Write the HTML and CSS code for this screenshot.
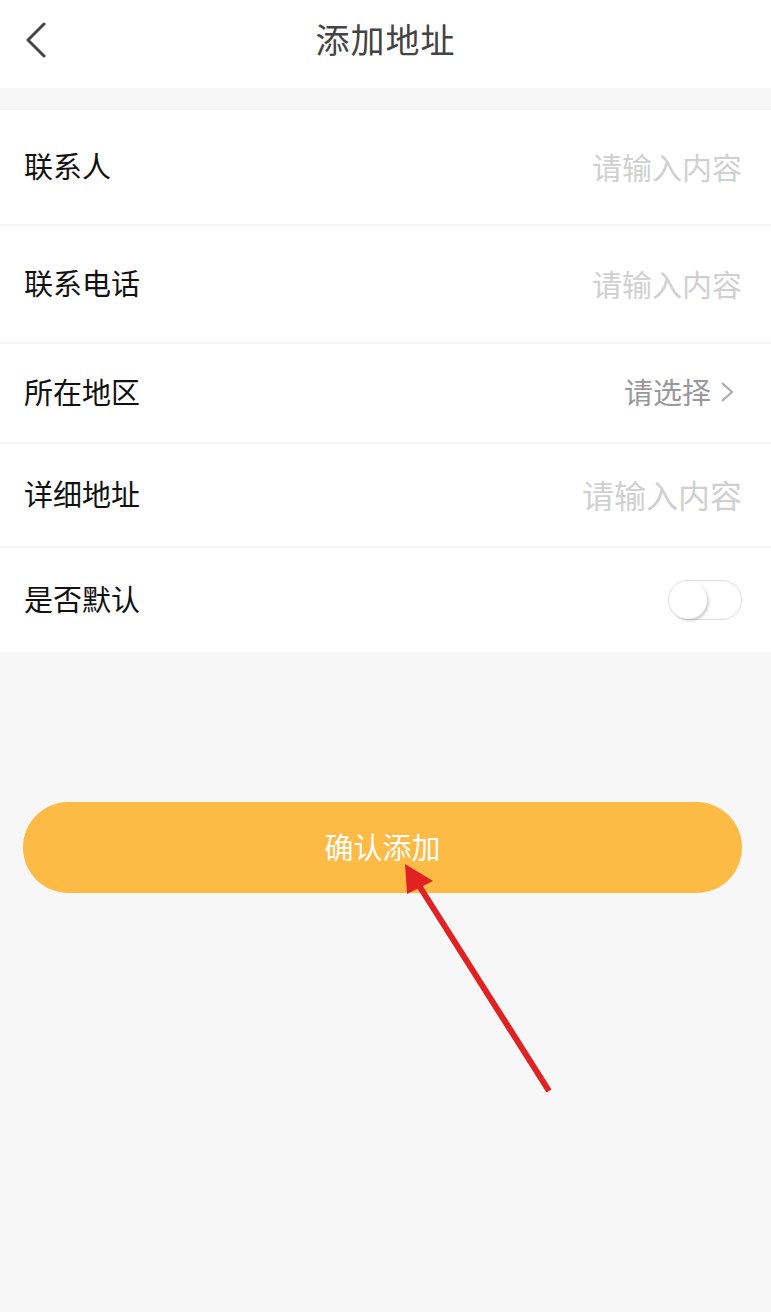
FILE: index.html
```html
<!DOCTYPE html>
<html lang="zh-CN">
<head>
<meta charset="utf-8">
<title>添加地址</title>
<link rel="stylesheet" href="styles.css">
</head>
<body>
<div class="page">
  <header class="topbar">
    <span class="back">
      <svg width="24" height="40" viewBox="0 0 24 40"><path d="M18 4 L2 20 L18 36" fill="none" stroke="#444" stroke-width="3" stroke-linecap="round" stroke-linejoin="round"/></svg>
    </span>
    <h1 class="title">添加地址</h1>
  </header>

  <div class="form">
    <div class="row r1"><span class="label">联系人</span><span class="ph">请输入内容</span></div>
    <div class="row r2"><span class="label">联系电话</span><span class="ph">请输入内容</span></div>
    <div class="row r3"><span class="label">所在地区</span><span class="select">请选择<svg width="14" height="24" viewBox="0 0 14 24"><path d="M2 3 L12 12 L2 21" fill="none" stroke="#aaa" stroke-width="2"/></svg></span></div>
    <div class="row r4"><span class="label">详细地址</span><span class="ph big">请输入内容</span></div>
    <div class="row r5"><span class="label">是否默认</span><span class="switch"><span class="knob"></span></span></div>
  </div>

  <div class="actions">
    <button class="submit">确认添加</button>
  </div>

  <svg class="arrow" width="771" height="1312" viewBox="0 0 771 1312">
    <line x1="549" y1="1091" x2="418" y2="884" stroke="#e02222" stroke-width="6"/>
    <polygon points="405,864 433,881 407,894" fill="#e02222"/>
  </svg>
</div>
</body>
</html>
```
FILE: styles.css
```css
html, body {
  margin: 0;
  padding: 0;
}
body {
  background: #f7f7f7;
  font-family: "Noto Sans CJK SC", "Noto Sans", sans-serif;
}
.page {
  position: relative;
  width: 771px;
  min-height: 1312px;
}
.topbar {
  height: 88px;
  background: #fff;
  display: flex;
  align-items: center;
  justify-content: center;
  position: relative;
}
.back {
  position: absolute;
  left: 26px;
  top: 20px;
  display: flex;
}
.title {
  margin: 0;
  font-size: 34px;
  font-weight: 400;
  color: #444;
  letter-spacing: 1px;
  line-height: 1;
  margin-top: -11px;
}
.form {
  margin-top: 22px;
  background: #fff;
}
.row {
  display: flex;
  align-items: center;
  justify-content: space-between;
  padding: 0 29px 0 24px;
  background: #fff;
  border-top: 2px solid #f4f4f4;
}
.r1 { height: 114px; border-top: none; }
.r2 { height: 116px; }
.r3 { height: 98px; }
.r4 { height: 102px; }
.r5 { height: 104px; }
.label {
  font-size: 29px;
  color: #111;
  line-height: 1;
  margin-top: -3px;
}
.ph {
  font-size: 30px;
  color: #d0d0d0;
  line-height: 1;
  margin-top: -3px;
}
.ph.big {
  font-size: 32px;
}
.select {
  display: flex;
  align-items: center;
  gap: 9px;
  font-size: 29px;
  color: #999;
  line-height: 1;
  margin-right: 8px;
  margin-top: -3px;
}
.switch {
  width: 72px;
  height: 38px;
  border: 1px solid #ddd;
  border-radius: 20px;
  position: relative;
  box-sizing: content-box;
  background: #fff;
}
.knob {
  position: absolute;
  left: 0;
  top: 0;
  width: 38px;
  height: 38px;
  border-radius: 50%;
  background: #fff;
  box-shadow: 2px 2px 3px rgba(0,0,0,0.18);
}
.actions {
  padding: 150px 29px 0 23px;
}
.submit {
  display: block;
  width: 100%;
  height: 91px;
  border: none;
  border-radius: 46px;
  background: #fdba45;
  color: #fff;
  font-family: "Noto Sans CJK SC", "Noto Sans", sans-serif;
  font-size: 29px;
  letter-spacing: 0;
  padding: 0 0 4px;
}
.arrow {
  position: absolute;
  left: 0;
  top: 0;
  pointer-events: none;
}
```
